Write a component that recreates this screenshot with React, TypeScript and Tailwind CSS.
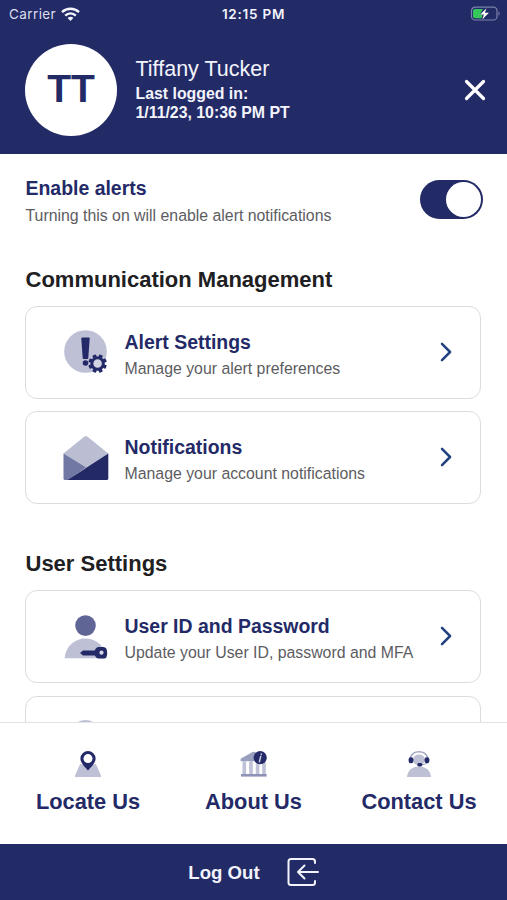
import type { ReactNode } from "react";

const FONT = "font-['Liberation_Sans',Arial,sans-serif]";

function WifiIcon() {
  return (
    <svg className="h-[15px] w-[19px]" viewBox="0 0 19 15" fill="none" stroke="#f3f4fb" strokeWidth="2.5">
      <path d="M1 5.200C5.700 .7 13.300 .7 18 5.200" />
      <path d="M4.200 8.600C7.300 5.700 11.700 5.700 14.800 8.600" />
      <path d="M6.600 11C8.400 9.400 10.600 9.400 12.400 11L9.500 14Z" fill="#f3f4fb" stroke="none" />
    </svg>
  );
}

function BatteryIcon() {
  return (
    <svg className="h-[16px] w-[32px]" viewBox="0 0 32 16" fill="none">
      <rect x="1.500" y="1.200" width="25.500" height="12.800" rx="3.600" stroke="#7c81ab" strokeWidth="1.200" />
      <path d="M28.500 5.500v4.200c1.600-.6 1.600-3.600 0-4.200Z" fill="#7c81ab" />
      <path d="M5 3h8l-3 5.500h2.500l-.8 3.700H5a2 2 0 0 1-2-2V5a2 2 0 0 1 2-2Z" fill="#35c759" />
      <path d="M16.500 2.300 10.200 8.500h3.700l-1.600 5 6.600-6.700h-4Z" fill="#fff" />
    </svg>
  );
}

function AlertIcon() {
  return (
    <svg className="size-[44px]" viewBox="0 0 44 44">
      <circle cx="21.500" cy="21.500" r="21.300" fill="#bec0d6" />
      <path d="M17.300 8.500q0-1 1-1h6.400q1 0 1 1L24.300 28q-.1 1-1 1h-3.600q-.9 0-1-1Z" fill="#232a67" />
      <circle cx="21.500" cy="33" r="2.800" fill="#232a67" />
      <g transform="translate(33.600 33.600)">
        <circle r="5.700" fill="#d2d4e3" stroke="#232a67" strokeWidth="2.900" />
        <g fill="#232a67">
          {[0, 45, 90, 135, 180, 225, 270, 315].map((a) => (
            <rect key={a} x="-1.900" y="-9.300" width="3.800" height="3.500" rx=".7" transform={`rotate(${a + 22.5})`} />
          ))}
        </g>
      </g>
    </svg>
  );
}

function EnvelopeIcon() {
  return (
    <svg className="h-[46px] w-[46px]" viewBox="0 0 46 46">
      <path d="M.5 18.500 21.500 1.400q1.400-1 2.800 0L45.300 18.500 23 34Z" fill="#bbbed3" />
      <path d="M.5 18.500 23 32.500 5 45H2q-1.500 0-1.500-1.500Z" fill="#7178a4" />
      <path d="M45.300 18.500V43.500q0 1.500-1.500 1.500H4.500Z" fill="#222965" />
    </svg>
  );
}

function UserKeyIcon() {
  return (
    <svg className="size-[44px]" viewBox="0 0 44 44">
      <circle cx="21.500" cy="10.600" r="10.300" fill="#5f6595" />
      <path d="M.6 43.200C1.500 31.500 10.500 23.500 21.500 23.500S41.500 31.500 42.400 43.200Z" fill="#bec0d5" />
      <path d="M16 38 19 35.600H30.800Q31.800 32.200 34.800 32H39.500Q43.200 32.200 43.200 38T39.500 43.500H34.800Q31.800 43.200 30.800 40.600H19Z" fill="#232a67" />
      <circle cx="37.500" cy="37.700" r="2.100" fill="#d6d8e5" />
    </svg>
  );
}

function PersonIcon() {
  return (
    <svg className="size-[44px]" viewBox="0 0 44 44">
      <circle cx="21.500" cy="15.500" r="15.500" fill="#bec0d5" />
    </svg>
  );
}

function PinIcon() {
  return (
    <svg className="size-[26px]" viewBox="0 0 26 26">
      <path d="M5 13.300h16L26 24.800q.2 1.200-1 1.200H1q-1.200 0-1-1.200Z" fill="#bec0d5" />
      <path d="M13 0a7.600 7.600 0 0 1 7.600 7.500c0 4.500-4.600 8.500-7.600 12.100C10 16 5.400 12 5.400 7.500A7.600 7.600 0 0 1 13 0Z" fill="#232a67" />
      <circle cx="13" cy="7.600" r="4.500" fill="#fff" />
    </svg>
  );
}

function BankIcon() {
  return (
    <svg className="h-[26px] w-[28px]" viewBox="0 0 28 26">
      <path d="M.6 10.300V7.800L12.500 1q1.200-.7 2.400 0L26 7.500v2.800Z" fill="#9b9fbf" />
      <path d="M2.500 10.300h3.600V23H2.500ZM9.200 10.300h3.600V23H9.200ZM15.800 10.300h3.600V23h-3.600ZM22.200 10.300h3.600V23h-3.600Z" fill="#bfc1d6" />
      <path d="M1 23h25.600v2.600H1Z" fill="#8e92b6" />
      <circle cx="20.200" cy="6.700" r="6.600" fill="#232a67" />
      <path d="m20.700 5.500-1.300 5.200M21.300 3.100l-.1.400" stroke="#c9cbdf" strokeWidth="1.500" strokeLinecap="round" />
    </svg>
  );
}

function HeadsetIcon() {
  return (
    <svg className="size-[26px]" viewBox="0 0 26 26">
      <path d="M1 26c.4-6.500 5-10.600 12-10.600S24.600 19.500 25 26Z" fill="#bec0d5" />
      <path d="M7 8.500a6 5 0 0 1 12 0c0 4-2.500 5.500-6 5.500s-6-1.500-6-5.500Z" fill="#bec0d5" />
      <path d="M4.300 7C5.500 2.700 8.500.8 13 .8s7.500 1.900 8.700 6.200" fill="none" stroke="#a3a6c4" strokeWidth="1.400" />
      <path d="M22.300 10c-.5 2.500-3 3.500-7 3.700" fill="none" stroke="#a3a6c4" strokeWidth="1" />
      <rect x="2.600" y="6.300" width="4.800" height="6" rx="2.200" fill="#232a67" />
      <rect x="18.600" y="6.300" width="4.800" height="6" rx="2.200" fill="#232a67" />
      <rect x="11.200" y="12" width="5.200" height="3.400" rx="1.700" fill="#232a67" />
    </svg>
  );
}

function Chevron() {
  return (
    <svg className="mb-px h-[20px] w-[12px]" viewBox="0 0 12 20" fill="none" stroke="#22427f" strokeWidth="2.500" strokeLinecap="round" strokeLinejoin="round">
      <path d="m2 1.800 8.100 8.200L2 18.200" />
    </svg>
  );
}

function Card({ icon, title, text }: { icon: ReactNode; title: string; text: string }) {
  return (
    <div className="flex h-[93px] shrink-0 items-center rounded-[12px] border-[1.500px] border-[#dcdcdf] pr-[28px] pl-[36.500px]">
      <div className="flex w-[46px] justify-center">{icon}</div>
      <div className="ml-[16px] flex-1 pt-[4.500px] whitespace-nowrap">
        <div className="text-[19.450px] leading-6 font-bold text-[#232a67]">{title}</div>
        <div className="mt-[5px] text-[15.850px] leading-5 text-[#5c5c5f]">{text}</div>
      </div>
      <Chevron />
    </div>
  );
}

function NavItem({ icon, label }: { icon: ReactNode; label: string }) {
  return (
    <div className="flex w-[165.500px] flex-col items-center">
      {icon}
      <div className="mt-[11px] text-[21.800px] leading-7 font-bold whitespace-nowrap text-[#232a67]">{label}</div>
    </div>
  );
}

export default function App() {
  return (
    <div className={`flex h-[900px] w-[507px] flex-col overflow-hidden bg-white ${FONT}`}>
      <header className="h-[153.500px] shrink-0 bg-[#232b67] text-[#f3f4fb]">
        <div className="grid h-7 grid-cols-3 items-center font-[Inter,sans-serif] text-[13.500px]">
          <div className="flex items-center gap-[5px] pl-[9px]">
            <span className="tracking-[0.400px] text-[#dcdeee]">Carrier</span>
            <WifiIcon />
          </div>
          <div className="text-center font-semibold tracking-[0.750px]">12:15 PM</div>
          <div className="flex justify-end pr-[5px]">
            <BatteryIcon />
          </div>
        </div>
        <div className="flex items-center pt-[15.500px] pr-[21px] pl-[25px]">
          <div className="flex size-[92px] items-center justify-center rounded-full bg-white text-[39px] font-bold text-[#232b67]">
            TT
          </div>
          <div className="ml-[18.500px] flex-1">
            <div className="text-[21.500px] leading-[26px]">Tiffany Tucker</div>
            <div className="mt-[1.500px] text-[15.850px] leading-[19.500px] font-bold">
              Last logged in:
              <br />
              1/11/23, 10:36 PM PT
            </div>
          </div>
          <svg className="size-[22px]" viewBox="0 0 22 22" stroke="#fff" strokeWidth="3.200" strokeLinecap="round">
            <path d="m2.500 2.500 17 17M19.500 2.500l-17 17" />
          </svg>
        </div>
      </header>

      <main className="flex min-h-0 flex-1 flex-col overflow-hidden pr-[26px] pl-[25px]">
        <div className="mt-[22.500px] -mr-[2px] flex h-[49px] shrink-0 justify-between">
          <div className="pl-[0.500px] whitespace-nowrap">
            <div className="text-[19.450px] leading-6 font-bold text-[#232a67]">Enable alerts</div>
            <div className="mt-[6px] text-[15.850px] leading-5 text-[#5c5c5f]">
              Turning this on will enable alert notifications
            </div>
          </div>
          <div className="mt-[4px] flex h-[39px] w-[63px] items-center justify-end rounded-full bg-[#232b67] pr-[2px]">
            <div className="size-[35px] rounded-full bg-white" />
          </div>
        </div>

        <h2 className="mt-[40.500px] shrink-0 pl-[0.500px] text-[22px] leading-7 font-bold text-[#202022]">
          Communication Management
        </h2>
        <div className="mt-3 flex shrink-0 flex-col gap-[12.500px]">
          <Card icon={<AlertIcon />} title="Alert Settings" text="Manage your alert preferences" />
          <Card icon={<EnvelopeIcon />} title="Notifications" text="Manage your account notifications" />
        </div>

        <h2 className="mt-[46px] shrink-0 pl-[0.500px] text-[22px] leading-7 font-bold text-[#202022]">User Settings</h2>
        <div className="mt-3 flex shrink-0 flex-col gap-[12.500px]">
          <Card icon={<UserKeyIcon />} title="User ID and Password" text="Update your User ID, password and MFA" />
          <Card icon={<PersonIcon />} title="" text="" />
        </div>
      </main>

      <nav className="flex h-[122px] shrink-0 justify-center border-t border-[#e3e3e7] bg-white pt-[28px]">
        <NavItem icon={<PinIcon />} label="Locate Us" />
        <NavItem icon={<BankIcon />} label="About Us" />
        <NavItem icon={<HeadsetIcon />} label="Contact Us" />
      </nav>

      <footer className="flex h-[56px] shrink-0 items-center justify-center gap-[27px] bg-[#232b67] text-[18.600px] font-bold text-[#f3f4fb]">
        <span className="pt-px">Log Out</span>
        <svg className="size-[32px]" viewBox="0 0 32 32" fill="none" stroke="#f3f4fb" strokeWidth="2" strokeLinecap="round" strokeLinejoin="round">
          <path d="M28 7V5.500Q28 3 25.500 3H4Q1.500 3 1.500 5.500v21Q1.500 29 4 29H25.500Q28 29 28 26.500V25" />
          <path d="M31 16H11M17.500 9.500 11 16l6.500 6.500" />
        </svg>
      </footer>
    </div>
  );
}
